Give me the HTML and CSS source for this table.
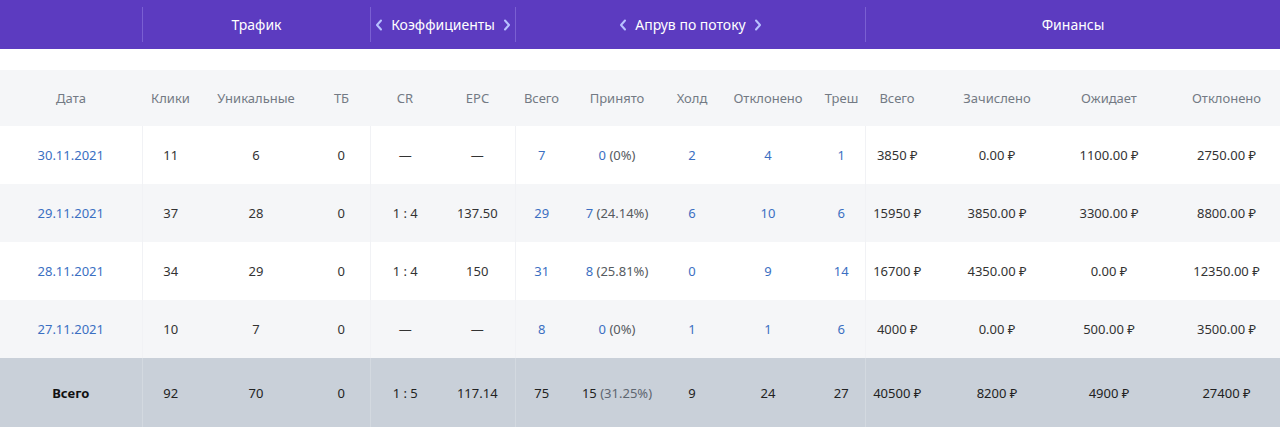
FILE: index.html
```html
<!DOCTYPE html>
<html lang="ru">
<head>
<meta charset="utf-8">
<title>Статистика</title>
<link rel="stylesheet" href="styles.css">
</head>
<body>
<div class="groups">
  <div class="group"></div>
  <div class="group"><div class="group-in">Трафик</div></div>
  <div class="group"><div class="group-in">
    <svg class="chev" viewBox="0 0 8 12"><polyline points="6,1.5 2,6 6,10.5"/></svg>
    <span>Коэффициенты</span>
    <svg class="chev" viewBox="0 0 8 12"><polyline points="2,1.5 6,6 2,10.5"/></svg>
  </div></div>
  <div class="group"><div class="group-in">
    <svg class="chev" viewBox="0 0 8 12"><polyline points="6,1.5 2,6 6,10.5"/></svg>
    <span>Апрув по потоку</span>
    <svg class="chev" viewBox="0 0 8 12"><polyline points="2,1.5 6,6 2,10.5"/></svg>
  </div></div>
  <div class="group"><div class="group-in">Финансы</div></div>
</div>

<table class="stats">
  <colgroup>
    <col class="c142"><col class="c57"><col class="c114"><col class="c57">
    <col class="c70"><col class="c75">
    <col class="c53"><col class="c98"><col class="c52"><col class="c100"><col class="c47">
    <col class="c64"><col class="c136"><col class="c88"><col class="c127">
  </colgroup>
  <thead>
    <tr>
      <th>Дата</th><th class="gs">Клики</th><th>Уникальные</th><th>ТБ</th>
      <th class="gs">CR</th><th>EPC</th>
      <th class="gs">Всего</th><th>Принято</th><th>Холд</th><th>Отклонено</th><th>Треш</th>
      <th class="gs">Всего</th><th>Зачислено</th><th>Ожидает</th><th class="last">Отклонено</th>
    </tr>
  </thead>
  <tbody>
    <tr>
      <td class="lnk">30.11.2021</td><td class="gs">11</td><td>6</td><td>0</td>
      <td class="gs">—</td><td>—</td>
      <td class="gs lnk">7</td><td><span class="lnk">0</span> <span class="pct">(0%)</span></td><td class="lnk">2</td><td class="lnk">4</td><td class="lnk">1</td>
      <td class="gs">3850 ₽</td><td>0.00 ₽</td><td>1100.00 ₽</td><td class="last">2750.00 ₽</td>
    </tr>
    <tr>
      <td class="lnk">29.11.2021</td><td class="gs">37</td><td>28</td><td>0</td>
      <td class="gs">1 : 4</td><td>137.50</td>
      <td class="gs lnk">29</td><td><span class="lnk">7</span> <span class="pct">(24.14%)</span></td><td class="lnk">6</td><td class="lnk">10</td><td class="lnk">6</td>
      <td class="gs">15950 ₽</td><td>3850.00 ₽</td><td>3300.00 ₽</td><td class="last">8800.00 ₽</td>
    </tr>
    <tr>
      <td class="lnk">28.11.2021</td><td class="gs">34</td><td>29</td><td>0</td>
      <td class="gs">1 : 4</td><td>150</td>
      <td class="gs lnk">31</td><td><span class="lnk">8</span> <span class="pct">(25.81%)</span></td><td class="lnk">0</td><td class="lnk">9</td><td class="lnk">14</td>
      <td class="gs">16700 ₽</td><td>4350.00 ₽</td><td>0.00 ₽</td><td class="last">12350.00 ₽</td>
    </tr>
    <tr>
      <td class="lnk">27.11.2021</td><td class="gs">10</td><td>7</td><td>0</td>
      <td class="gs">—</td><td>—</td>
      <td class="gs lnk">8</td><td><span class="lnk">0</span> <span class="pct">(0%)</span></td><td class="lnk">1</td><td class="lnk">1</td><td class="lnk">6</td>
      <td class="gs">4000 ₽</td><td>0.00 ₽</td><td>500.00 ₽</td><td class="last">3500.00 ₽</td>
    </tr>
  </tbody>
  <tfoot>
    <tr>
      <td class="total-label">Всего</td><td class="gs">92</td><td>70</td><td>0</td>
      <td class="gs">1 : 5</td><td>117.14</td>
      <td class="gs">75</td><td>15 <span class="pct-t">(31.25%)</span></td><td>9</td><td>24</td><td>27</td>
      <td class="gs">40500 ₽</td><td>8200 ₽</td><td>4900 ₽</td><td class="last">27400 ₽</td>
    </tr>
  </tfoot>
</table>
</body>
</html>
```

FILE: styles.css
```css
html, body {
  margin: 0;
  padding: 0;
  background: #ffffff;
}

body {
  font-family: "Noto Sans", "DejaVu Sans", sans-serif;
  font-size: 13px;
  color: #333333;
  width: 1280px;
  overflow: hidden;
}

.groups {
  display: grid;
  grid-template-columns: 142px 228px 145px 350px 415px;
  height: 49px;
  background: #5c3bc0;
  box-sizing: border-box;
  padding: 7px 0;
}

.group-in {
  height: 35px;
  display: flex;
  align-items: center;
  justify-content: center;
  gap: 8px;
  color: #ffffff;
  font-size: 14px;
}

.group + .group .group-in {
  border-left: 1px solid #7a5fd2;
}

.chev {
  width: 8px;
  height: 12px;
  fill: none;
  stroke: #b8c2ff;
  stroke-width: 2;
  stroke-linecap: round;
  stroke-linejoin: round;
}

.stats {
  margin-top: 21px;
  width: 1280px;
  table-layout: fixed;
  border-collapse: collapse;
  border-spacing: 0;
}

.c142 { width: 142px; }
.c57 { width: 57px; }
.c114 { width: 114px; }
.c70 { width: 70px; }
.c75 { width: 75px; }
.c53 { width: 53px; }
.c98 { width: 98px; }
.c52 { width: 52px; }
.c100 { width: 100px; }
.c47 { width: 47px; }
.c64 { width: 64px; }
.c136 { width: 136px; }
.c88 { width: 88px; }
.c127 { width: 127px; }

.stats th,
.stats td {
  padding: 0;
  text-align: center;
  white-space: nowrap;
  font-weight: normal;
}

.stats th {
  height: 56px;
  color: #737a84;
  background: #f5f6f8;
}

.stats td {
  height: 58px;
}

.stats tbody tr:nth-child(odd) td {
  background: #ffffff;
}

.stats tbody tr:nth-child(even) td {
  background: #f5f6f8;
}

.stats tbody td.gs {
  border-left: 1px solid #f1f2f5;
}

.stats .last {
  padding-left: 20px;
}

.lnk {
  color: #3b6fc2;
}

.pct {
  color: #555a60;
}

.stats tfoot td {
  height: 69px;
  background: #c9d0d9;
  color: #222222;
}

.stats tfoot td.gs {
  border-left: 1px solid #d3d9e0;
}

.stats tfoot .total-label {
  font-weight: bold;
  color: #111111;
}

.pct-t {
  color: #5e6670;
}
```
